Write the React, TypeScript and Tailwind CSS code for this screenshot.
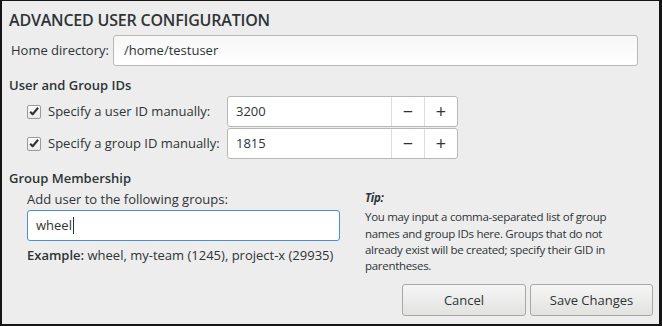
import React from 'react';

const CheckIcon: React.FC = () => (
  <span className="flex h-[14px] w-[14px] items-center justify-center rounded-[2px] border border-[#9a9a98] bg-gradient-to-b from-white to-[#e8e8e7]">
    <svg viewBox="0 0 14 14" className="h-[13px] w-[13px]">
      <path d="M2.5 7.2 L5.4 10.2 L11.8 2.6" fill="none" stroke="#2e3436" strokeWidth="2.4" strokeLinejoin="round" />
    </svg>
  </span>
);

const SpinRow: React.FC<{ label: string; value: string }> = ({ label, value }) => (
  <div className="flex h-[31px] items-center">
    <div className="flex w-[218px] items-center whitespace-nowrap pl-[18px]">
      <CheckIcon />
      <span className="ml-[7px]">{label}</span>
    </div>
    <div className="flex h-[31px] w-[231px] overflow-hidden rounded-[3px] border border-[#b8b8b6] bg-white">
      <div className="flex flex-1 items-center pl-[8px]">{value}</div>
      <div className="flex w-[33px] items-center justify-center border-l border-[#dcdcda] text-[18px]">−</div>
      <div className="flex w-[33px] items-center justify-center border-l border-[#dcdcda] text-[18px]">+</div>
    </div>
  </div>
);

const App: React.FC = () => {
  return (
    <div
      className="h-[326px] w-[662px] overflow-hidden border-t border-l-2 border-r-[3px] border-b-2 border-[#151515] bg-[#ededed] text-[13px] text-[#2e3436]"
      style={{ fontFamily: '"Open Sans", "Noto Sans", sans-serif' }}
    >
      <div className="flex flex-col px-[7px] pt-[8px]">
        <h1 className="text-[16px] font-semibold leading-[22px] tracking-[-0.2px]">ADVANCED USER CONFIGURATION</h1>

        <div className="mt-[4px] flex items-center">
          <span className="ml-[2px] w-[102px]">Home directory:</span>
          <div className="flex h-[31px] w-[525px] items-center rounded-[3px] border border-[#b8b8b6] bg-gradient-to-b from-[#f7f7f7] to-white pl-[10px]">
            /home/testuser
          </div>
        </div>

        <h2 className="mt-[10px] font-semibold leading-[18px]">User and Group IDs</h2>

        <div className="mt-[2px] flex flex-col gap-[1px]">
          <SpinRow label="Specify a user ID manually:" value="3200" />
          <SpinRow label="Specify a group ID manually:" value="1815" />
        </div>

        <div className="mt-[10px] flex">
          <div className="flex w-[337px] flex-col">
            <h2 className="font-semibold leading-[18px]">Group Membership</h2>
            <div className="mt-[3px] pl-[18px] leading-[18px]">Add user to the following groups:</div>
            <div className="ml-[18px] mt-[2px] flex h-[31px] w-[313px] items-center rounded-[3px] border border-[#4a90d9] bg-white pl-[8px]">
              wheel<span className="ml-[1px] h-[17px] w-[1px] bg-[#2e3436]" />
            </div>
            <div className="mt-[5px] pl-[18px] leading-[18px]">
              <span className="font-semibold">Example:</span> wheel, my-team (1245), project-x (29935)
            </div>
          </div>
          <div className="ml-[19px] mt-[21px] w-[262px] text-[11.5px] leading-[16.3px] tracking-[-0.3px]">
            <div className="mb-[3px] font-bold italic">Tip:</div>
            <p>
              You may input a comma-separated list of group names and group IDs here. Groups that do not
              already exist will be created; specify their GID in parentheses.
            </p>
          </div>
        </div>
      </div>

      <div className="mt-[10px] flex justify-end gap-[4px] pr-[6px]">
        <button className="h-[32px] w-[124px] rounded-[3px] border border-[#a8a8a6] bg-gradient-to-b from-[#f6f6f6] to-[#e2e2e1]">
          Cancel
        </button>
        <button className="h-[32px] w-[123px] rounded-[3px] border border-[#a8a8a6] bg-gradient-to-b from-[#f6f6f6] to-[#e2e2e1]">
          Save Changes
        </button>
      </div>
    </div>
  );
};

export default App;
